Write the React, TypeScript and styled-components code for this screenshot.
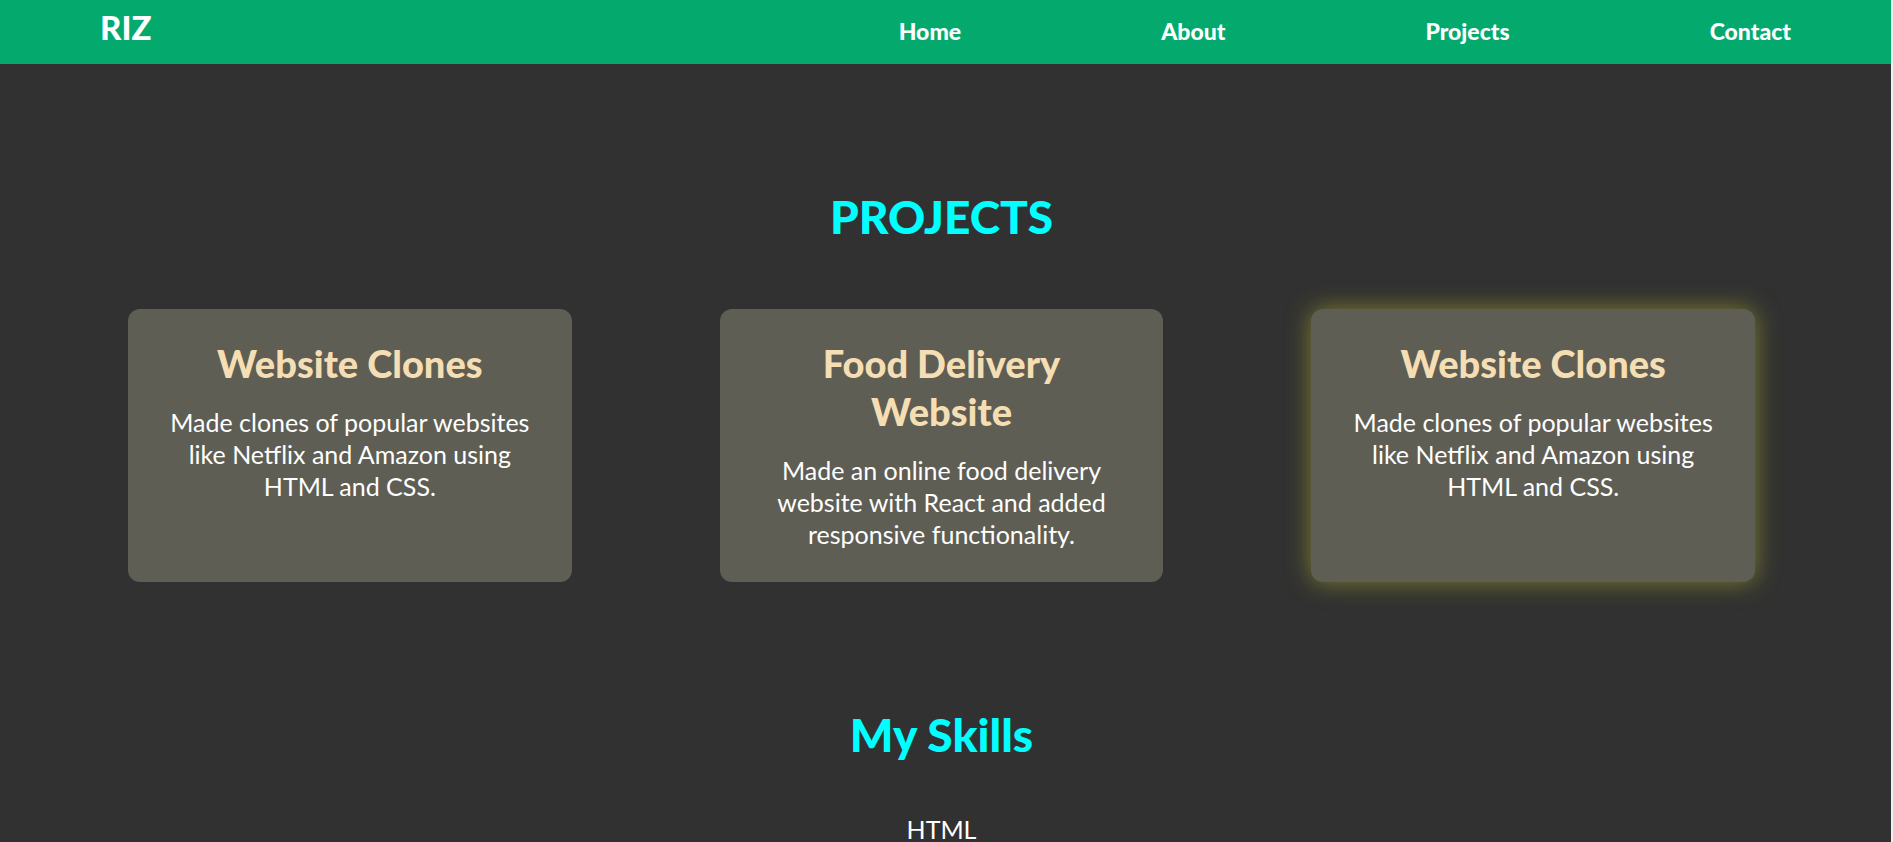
import React from "react";
import styled, { createGlobalStyle } from "styled-components";

const GlobalStyle = createGlobalStyle`
  *, *::before, *::after { box-sizing: border-box; }
  html { background: #313131; overflow: hidden; }
  body { margin: 0; font-family: Lato, "Liberation Sans", sans-serif; color: #fff; }
  h1, h2, h3, p, ul { margin: 0; padding: 0; }
`;

const Page = styled.div`
  height: 100vh;
  overflow: hidden;
  background: #313131;
  border-right: 2px solid #f1f1f1;
`;

const NavBar = styled.header`
  display: flex;
  justify-content: space-between;
  align-items: center;
  height: 64px;
  padding: 0 100px;
  background: #04aa6d;
`;

const Brand = styled.a`
  padding-bottom: 10px;
  font-size: 33px;
  font-weight: 900;
  line-height: 40px;
  color: #fff;
  text-decoration: none;
`;

const NavLinks = styled.nav`
  display: flex;
  gap: 200px;
  padding-bottom: 2px;
`;

const NavLink = styled.a`
  font-size: 23px;
  font-weight: 900;
  line-height: 28px;
  color: #fff;
  text-decoration: none;
`;

const Main = styled.main`
  padding-right: 8px;
  text-align: center;
`;

const Section = styled.section`
  padding-top: 123px;
`;

const SectionTitle = styled.h2`
  font-size: 46px;
  font-weight: 900;
  line-height: 60px;
  color: #00ffff;
`;

const CardGrid = styled.div`
  display: grid;
  grid-template-columns: repeat(3, minmax(0, 1fr));
  gap: 148px;
  padding: 0 128px;
  margin-top: 62px;
`;

const Card = styled.article<{ $glow?: boolean }>`
  padding: 30px 36px 32px;
  border-radius: 12px;
  background: #5e5e55;
  box-shadow: ${({ $glow }) => ($glow ? "0 0 25px rgba(134, 134, 50, 0.9)" : "none")};
`;

const CardTitle = styled.h3`
  margin-bottom: 19px;
  font-size: 38px;
  font-weight: 900;
  line-height: 48px;
  color: #f5deb3;
`;

const CardText = styled.p`
  font-size: 25px;
  line-height: 32px;
`;

const SkillList = styled.ul`
  margin-top: 48px;
  list-style: none;
  font-size: 25px;
  line-height: 32px;
`;

const links = ["Home", "About", "Projects", "Contact"];

const clones = {
  title: "Website Clones",
  text: "Made clones of popular websites like Netflix and Amazon using HTML and CSS.",
};

const projects = [
  { ...clones, glow: false },
  {
    title: "Food Delivery Website",
    text: "Made an online food delivery website with React and added responsive functionality.",
    glow: false,
  },
  { ...clones, glow: true },
];

export default function App() {
  return (
    <>
      <GlobalStyle />
      <Page>
        <NavBar>
          <Brand href="#home">RIZ</Brand>
          <NavLinks>
            {links.map((label) => (
              <NavLink key={label} href={`#${label.toLowerCase()}`}>{label}</NavLink>
            ))}
          </NavLinks>
        </NavBar>
        <Main>
          <Section id="projects">
            <SectionTitle>PROJECTS</SectionTitle>
            <CardGrid>
              {projects.map((project, index) => (
                <Card key={index} $glow={project.glow}>
                  <CardTitle>{project.title}</CardTitle>
                  <CardText>{project.text}</CardText>
                </Card>
              ))}
            </CardGrid>
          </Section>
          <Section id="skills">
            <SectionTitle>My Skills</SectionTitle>
            <SkillList>
              <li>HTML</li>
            </SkillList>
          </Section>
        </Main>
      </Page>
    </>
  );
}
